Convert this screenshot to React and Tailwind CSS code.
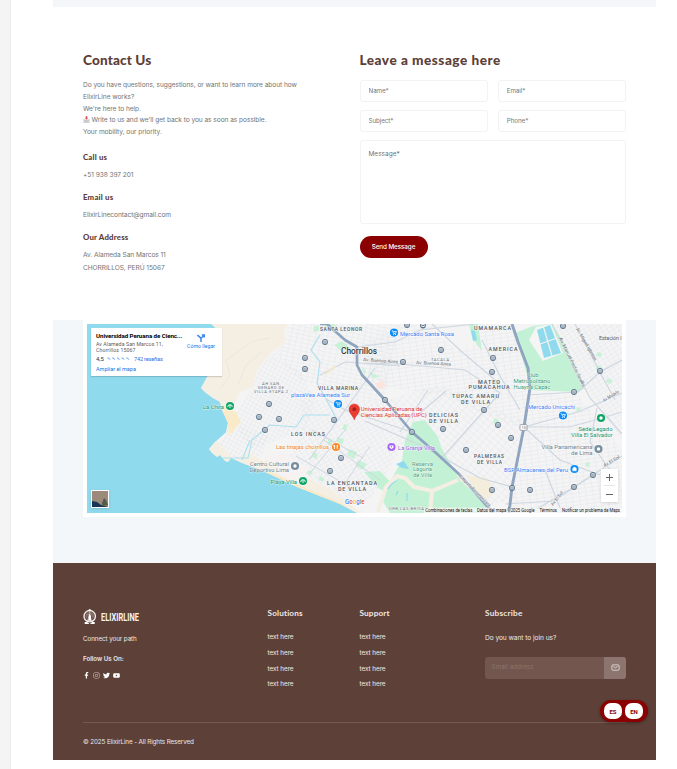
import React from "react";
import { FaFacebookF, FaInstagram, FaTwitter, FaYoutube } from "react-icons/fa";

const area = [
  ["SANTA LEONOR", 320, 331, 42, 4.9],
  ["VILLA MARINA", 318, 390, 40, 5],
  ["LOS INCAS", 291, 435.6, 34, 5.2],
  ["LA ENCANTADA", 327, 485, 50, 5.4],
  ["DE VILLA", 338, 491, 28, 5.4],
  ["DELICIAS", 429, 417.2, 29, 5.3],
  ["DE VILLA", 429, 423.4, 29, 5.3],
  ["PALMERAS", 474, 458.3, 30, 4.8],
  ["DE VILLA", 477, 463.5, 25, 4.8],
  ["UMAMARCA", 474, 329.6, 37, 5.3],
  ["AMERICA", 488.5, 351.2, 29, 5.3],
  ["MATEO", 478, 383.7, 22, 5.4],
  ["PUMACAHUA", 468.5, 389.4, 41, 5.4],
  ["TUPAC AMARU", 452, 398.3, 47, 5.4],
  ["DE VILLA", 461, 404.2, 29, 5.4],
];
const minor = [
  ["AH SAN", 262, 385.2, 17, 4],
  ["GENARO DE", 258, 389.4, 26, 4],
  ["VILLA ETAPA 2", 254, 393.4, 34, 4],
  ["TACALA", 431, 360.5, 18, 4],
  ["URB LAS BRISA", 389, 510, 35, 4.2],
];
const places = [
  ["Mercado Santa Rosa", 400, 335.6, 54, "#3b82f6"],
  ["plazaVea Alameda Sur", 291, 396.6, 59, "#3b82f6"],
  ["Mercado Unicachi", 528, 408.5, 47, "#3b82f6"],
  ["BSF Almacenes del Peru", 504, 472, 64, "#3b82f6"],
  ["La Chira", 203, 409, 21, "#12946a"],
  ["Playa Villa", 270.5, 484, 26.5, "#12946a"],
  ["Sede Legado", 578.5, 431, 34, "#12946a"],
  ["Villa El Salvador", 571, 437, 41.5, "#12946a"],
  ["Club", 527, 377.3, 11.5, "#3d9b78"],
  ["Metropolitano", 513.5, 383.4, 37, "#3d9b78"],
  ["Huayna Capac", 513.5, 389, 37, "#3d9b78"],
  ["Reserva", 412, 465.5, 21, "#4f9f83"],
  ["Laguna", 413, 471.3, 19, "#4f9f83"],
  ["de Villa", 413, 477, 19, "#4f9f83"],
  ["Centro Cultural", 250, 466, 39, "#6b8290"],
  ["Deportivo Lima", 249.5, 472.3, 39.5, "#6b8290"],
  ["Villa Panamericana", 541.5, 449, 51, "#6b8290"],
  ["de Lima", 571, 454.8, 21.5, "#6b8290"],
  ["Las tinajas chorrillos", 276, 449.3, 53, "#ef7f2c"],
  ["La Granja Villa", 398, 450, 37, "#a259e6"],
  ["Universidad Peruana de", 360.8, 410.9, 61.5, "#d92f2a"],
  ["Ciencias Aplicadas (UPC)", 360.8, 417.1, 66, "#d92f2a"],
];
const streets = [
  ["Av. Buenos Aires", 363, 361, 35, 4],
  ["Av. Buenos Aires", 416, 364, 35, 3],
  ["Av. Miguel Iglesias", 576, 329, 37, 60],
  ["Av. Manuel Pastor Sevilla", 559, 338.5, 54, 64],
  ["Av Modelo", 604, 402, 18, -31],
  ["Av El Sol", 604.5, 467, 18, -30],
  ["Av El Sol", 553, 506, 17, -52],
  ["Autopista Panamericana", 458, 476, 44, 45],
];
const stops = [
  [325, 342], [305, 358], [305, 369], [403, 362], [385, 400], [269, 404],
  [259, 417], [279, 419], [265, 430], [334, 420], [407, 325], [423, 325.5],
  [441, 350], [493, 358], [492, 372], [484, 410], [563, 326], [600, 371],
  [574, 392], [330, 471], [412, 432], [443, 429], [498, 425], [511, 438],
  [466, 450], [492, 490], [512, 488], [530, 490], [574, 487], [593, 475],
  [341, 458],
];
const coast =
  "M211 324 L218 330 L220 350 L217 366 L207 377 L201 388 L206 393 L213 398 L220 402 L222 410 L228 423 L226 432 L215 442 L209 449 L212 453 L217 457 L220 455 L225 461 L228 462 L231 458 L242 463 L263 471 L297 487 L340 504 L357 513 L622 513 L622 324 Z";

function Label({ item, fill, weight = 400, halo = "#f6f6f6", adjust = "spacingAndGlyphs" }) {
  const [text, x, y, width, size] = item;
  return (
    <text x={x} y={y} textLength={width} lengthAdjust={adjust} fontSize={size} fontWeight={weight} fill={fill} stroke={halo} strokeWidth="0.9" paintOrder="stroke" strokeLinejoin="round">
      {text}
    </text>
  );
}

function Cart({ x, y }) {
  return (
    <g transform={`translate(${x} ${y})`}>
      <circle r="4.6" fill="#fff" />
      <circle r="4.1" fill="#0b8df5" />
      <path d="M-2.3 -1.8h1l.9 2.6h2l.8-1.9h-2.9" fill="none" stroke="#fff" strokeWidth=".8" />
      <circle cx="-.3" cy="1.9" r=".5" fill="#fff" />
      <circle cx="1.5" cy="1.9" r=".5" fill="#fff" />
    </g>
  );
}

function Poi({ x, y, color, children }) {
  return (
    <g transform={`translate(${x} ${y})`}>
      <circle r="4.6" fill="#fff" />
      <circle r="4.1" fill={color} />
      {children || <circle r="1.7" fill="#fff" />}
    </g>
  );
}

function Grid({ id, angle, w = 5, h = 4 }) {
  return (
    <pattern id={id} width={w} height={h} patternUnits="userSpaceOnUse" patternTransform={`rotate(${angle})`}>
      <path d={`M0 0H${w}M0 0V${h}`} stroke="#dfe4ea" strokeWidth="0.8" />
    </pattern>
  );
}

function MapCanvas() {
  return (
    <svg viewBox="87 324 535 189" className="block h-[189px] w-[535px] font-[Roboto,sans-serif]">
      <defs>
        <clipPath id="land"><path d={coast} /></clipPath>
        <Grid id="g1" angle={-32} />
        <Grid id="g2" angle={12} w={6} />
        <Grid id="g3" angle={42} w={6} h={5} />
        <Grid id="g4" angle={-8} w={7} h={4} />
        <Grid id="g5" angle={28} w={4} h={4} />
      </defs>
      <rect x="87" y="324" width="535" height="189" fill="#90daee" />
      <g clipPath="url(#land)">
        <path d={coast} fill="#f5f4f5" />
        <path d="M288 324L400 324 385 400 345 400 300 380 275 353 285 342Z" fill="url(#g2)" />
        <path d="M253 387L257 370 272 353 300 372 316 400 305 430 250 450 232 420Z" fill="url(#g5)" />
        <path d="M218 446L232 425 270 435 262 455 240 462Z" fill="url(#g5)" />
        <path d="M400 324H513L528 385 524 430 440 395 372 385 362 345Z" fill="url(#g4)" />
        <path d="M300 400L380 400 412 432 370 500 340 504 280 475 305 425Z" fill="url(#g1)" />
        <path d="M385 400L440 385 524 420 514 500 490 505 430 440Z" fill="url(#g3)" />
        <path d="M527 395L578 395 622 450V513H510Z" fill="url(#g4)" />
        <path d="M545 324H622V440L585 388Z" fill="url(#g1)" />

        <path d="M195 324H288L284 330 286 342 270 353 257 370 253 387 240 392 227 420 236 430 228 436 215 400 195 395Z" fill="#f5efe3" />
        <path d="M222 405L236 412 241 422 230 434Z" fill="#f9ebc9" />
        <path d="M207 449L216 440 235 460 248 452 263 461 282 455 300 474 330 489 362 513H345L240 467 215 460Z" fill="#f5efe3" />
        <path d="M262 470L298 486 345 506" stroke="#f8e8c3" strokeWidth="2" fill="none" />
        <path d="M221 388L230 375 226 360 240 350 253 341 270 338M238 385L246 365 262 352" stroke="#dfe3d9" strokeWidth=".6" fill="none" />
        <path d="M465 475L488 478 494 492 487 500 474 489Z" fill="#f5eddc" />
        <path d="M263 455L282 452 312 470 305 486 280 475Z" fill="#f5f2f1" />
        <path d="M427 330L450 324 474 327 473 347 455 350 446 340Z" fill="#f5f4f5" />

        <path d="M515 333L533 326 552 324 567 347 585 388 578 392 528 390 527 375Z" fill="#c3f1d5" />
        <path d="M529 340L536 327 551 324 563 353 543 361Z" fill="#f5f5f3" />
        <path d="M537 330L550 325 561 353 544 358Z" fill="#90daee" />
        <path d="M543.5 327L552 356M540 344L557 338" stroke="#f2f4f3" strokeWidth="1.2" />
        <path d="M469 324H478L482 351 472 338Z" fill="#c3f1d5" />
        <path d="M471 330l4 1 2 9-4 1z" fill="#90daee" />
        <path d="M413 422L425 420 438 437 441 447 460 480 490 509 486 513H390L382 500 392 478 402 460 405 440Z" fill="#c3f1d5" />
        <path d="M396 464l8-3 5 8-7-1z" fill="#90daee" />
        <path d="M364 472L380 471 398 490 391 495 378 488Z" fill="#c3f1d5" />
        <path d="M378 512L386 487 397 476 405 478 414 487 432 491 458 480M432 491L430 513" stroke="#f5efe3" strokeWidth="4" fill="none" />
        <path d="M388 489q4-7 9-8M396 495l2-4M407 493v8" stroke="#90daee" strokeWidth="1.2" fill="none" />
        <path d="M334 345L342 341 353 350 340 350ZM322 324h12l4 3-6 4zM314 326l5 0v5l-6 1zM361 366l5 5-1 4zM368 371l12 6-7 1zM349 449l8 3-3 7-7-4zM358 460l9 4-4 6-8-4zM337 437l7 2-2 6-5-3zM344 424l4 1-2 6-4-2zM313 452l5 2-2 5-4-2zM329 438l4 2-2 6-4-2zM309 470l4 2-3 4-4-3zM320 476l5 3-3 3-4-3zM597 365l5 2-2 5-4-2zM597 352l5 1-1 4-5-1zM577 407l4 1-2 4-3-1zM607 378l6 2-3 4-4-2zM586 462l4 1-1 4-4-1zM494 418l5 2-2 5-4-2zM494 380l5 1-1 4-4-1z" fill="#c9f1d8" />
        <path d="M375 384l8-4 3 6-7 4z" fill="#fbe3de" />

        <path d="M320 335L311 350 320 362 317 383 326 399 337 420M222 458L248 458 252 440 270 425 296 427 304 415 330 415M242 460L250 440" stroke="#a9e0ee" strokeWidth="1.1" fill="none" />
        <g stroke="#ced7e0" fill="none" strokeWidth="1.2">
          <path d="M357 347L395 342 420 330 475 324M357 363L400 364 465 370 500 393M320 375L345 362 400 366M432 324L462 352 500 384M326 399L345 410 412 432M309 460L345 410 375 368M365 421L420 445 480 478 512 487M500 393L440 460M428 390L400 432M482 340L500 376 520 410M420 413L446 391" />
          <path d="M527 395L578 392 600 372 622 360M552 324L590 398 622 434M575 324L602 376 615 400M622 393L578 412 524 427M524 427L560 460 600 475M530 513L574 487 622 456M545 470L562 513M597 408L590 442 610 470" />
          <path d="M524 427H570L622 412M505 504L554 501 593 475M312 430L363 458M296 456L350 487M324 440L380 480M345 430L310 473M370 446L344 485" strokeWidth="1" />
        </g>
        <path d="M320 324H327L345 340 357 347 357 365 362 375 385 400 412 432 435 452 460 475 493 513" stroke="#8fa4bf" strokeWidth="2.7" strokeLinejoin="round" fill="none" />
        <path d="M512 324L518 342 528 368 530 388 524 427 512 487 509 513" stroke="#8fa4bf" strokeWidth="2.9" strokeLinejoin="round" fill="none" />
        <path d="M325 374l11-8" stroke="#f3e6c6" strokeWidth="1.6" />
      </g>

      {stops.map(([x, y], i) => (
        <g key={i} transform={`translate(${x} ${y})`}>
          <circle r="2.9" fill="#5c7288" />
          <rect x="-1.6" y="-1.8" width="3.2" height="3.2" rx=".5" fill="#e6ecf2" />
          <path d="M-1 0H1" stroke="#5c7288" strokeWidth=".9" />
        </g>
      ))}
      {streets.map(([t, x, y, w, a], i) => (
        <text key={i} transform={`translate(${x} ${y}) rotate(${a})`} textLength={w} lengthAdjust="spacingAndGlyphs" fontSize="4.6" fill="#5b6670" stroke="#f6f6f6" strokeWidth=".7" paintOrder="stroke">{t}</text>
      ))}
      {area.map((t, i) => <Label key={i} item={t} fill="#4d565f" weight={500} adjust="spacing" />)}
      {minor.map((t, i) => <Label key={i} item={t} fill="#68727b" adjust="spacing" />)}
      {places.map(([t, x, y, w, c], i) => <Label key={i} item={[t, x, y, w, 5.9]} fill={c} halo="#ffffffb0" />)}
      <Label item={["Chorrillos", 341, 354, 36, 8.4]} fill="#30373d" weight={500} />

      <Cart x={394} y={332.6} />
      <Cart x={338} y={404} />
      <Cart x={563} y={415.5} />
      <Poi x={574.5} y={469} color="#0b8df5"><path d="M-1.8-.7h3.6v2.5h-3.6zM-.9-.7v-1h1.8v1" fill="#fff" stroke="#fff" strokeWidth=".5" /></Poi>
      <Poi x={230} y={406} color="#10a568"><path d="M-2.3 1a2.3 2.3 0 0 1 4.6 0M0-1V2" fill="none" stroke="#fff" strokeWidth=".9" /></Poi>
      <Poi x={303} y={481} color="#10a568"><path d="M-2.3 1a2.3 2.3 0 0 1 4.6 0M0-1V2" fill="none" stroke="#fff" strokeWidth=".9" /></Poi>
      <Poi x={601} y={418} color="#10a568" />
      <Poi x={295} y={466} color="#788e9f" />
      <Poi x={598.5} y={449} color="#788e9f" />
      <Poi x={336} y={447} color="#f98b2b"><path d="M-1.5-2v4M-2.2-2v1.5h1.4M1.2-2v4M1.2-2q1.2 1 0 2.4" fill="none" stroke="#fff" strokeWidth=".8" /></Poi>
      <Poi x={391.5} y={447} color="#a566ee"><path d="M-2-1.6h4v2L0 2.2-2 .4z" fill="#fff" /><circle cy="-.2" r=".7" fill="#a566ee" /></Poi>
      <rect x="520" y="424.6" width="7" height="5.8" rx="1" fill="#fff" stroke="#7b8792" strokeWidth=".7" />
      <text x="521.5" y="429.2" fontSize="4" fill="#56616b">15</text>
      <path d="M354.3 420C353.4 415.8 349 413.6 349 409.2a5.3 5.3 0 0 1 10.6 0C359.6 413.6 355.2 415.8 354.3 420Z" fill="#ea3c33" stroke="#c5221f" strokeWidth=".4" />
      <circle cx="354.3" cy="409.2" r="1.9" fill="#a3201b" />
      <text x="345" y="503.6" fontSize="7.6" fontWeight="500" textLength="19.5" lengthAdjust="spacingAndGlyphs" stroke="#fff" strokeWidth=".8" paintOrder="stroke">
        <tspan fill="#4285f4">G</tspan><tspan fill="#ea4335">o</tspan><tspan fill="#fbbc05">o</tspan><tspan fill="#4285f4">g</tspan><tspan fill="#34a853">l</tspan><tspan fill="#ea4335">e</tspan>
      </text>
      <text x="599" y="339.6" fontSize="5.6" fill="#52606c" textLength="22.5" lengthAdjust="spacingAndGlyphs">Estación l</text>

      <rect x="424" y="507.5" width="198" height="5.5" fill="#f5f5f5" opacity=".75" />
      <g fontSize="4.7" fill="#111">
        <text x="425.3" y="511.8" textLength="47" lengthAdjust="spacingAndGlyphs">Combinaciones de teclas</text>
        <text x="477" y="511.8" textLength="57.5" lengthAdjust="spacingAndGlyphs">Datos del mapa ©2025 Google</text>
        <text x="539.5" y="511.8" textLength="17.5" lengthAdjust="spacingAndGlyphs">Términos</text>
        <text x="562" y="511.8" textLength="58" lengthAdjust="spacingAndGlyphs">Notificar un problema de Maps</text>
      </g>
    </svg>
  );
}

function PlaceCard() {
  return (
    <div className="absolute top-[4px] left-[4px] flex h-[48px] w-[131px] justify-between bg-white py-[4px] pr-[7px] pl-[5px] font-[Roboto,sans-serif] text-[5.2px] leading-[6px] whitespace-nowrap text-[#5b5b5b] shadow-[0_1px_1px_rgba(0,0,0,0.15)]">
      <div className="flex flex-col">
        <b className="w-[83px] text-[6.2px] leading-[8px] font-bold tracking-[-0.08px] text-black">Universidad Peruana de Cienc...</b>
        <span className="mt-[1px] tracking-[0.1px]">Av Alameda San Marcos 11,</span>
        <span className="tracking-[0.1px]">Chorrillos 15067</span>
        <div className="mt-[2.5px] flex items-center gap-[3px]">
          <span className="text-[6px] text-[#333]">4,5</span>
          <svg viewBox="0 0 23 4" className="h-[4px] w-[23px]" fill="none" stroke="#4f95ee" strokeWidth="0.9">
            <path d="M.5 1l1.5.2 1 1.5M5.2 1l1.5.2 1 1.5M9.9 1l1.5.2 1 1.5M14.6 1l1.5.2 1 1.5M19.3 1l1.5.2 1 1.5" />
          </svg>
          <span className="ml-[1px] text-[5.5px] tracking-[-0.12px] text-[#1a73e8]">742 reseñas</span>
        </div>
        <span className="mt-[4px] text-[5.5px] text-[#1a73e8]">Ampliar el mapa</span>
      </div>
      <div className="flex flex-col items-center pt-[1.5px] text-[#1a73e8]">
        <svg viewBox="0 0 8 8" className="h-[8px] w-[8px]" fill="none" stroke="#3d87ee" strokeWidth="1.5">
          <path d="M.4 1L4 4.2V8M4 4.2L6.5 2M4.7 1H7.3V3.6" />
        </svg>
        <span className="mt-[1.5px] text-[5.2px]">Cómo llegar</span>
      </div>
    </div>
  );
}

function Field({ label }) {
  return (
    <input
      placeholder={label}
      className="h-[22px] w-full rounded-[3px] border border-[#f3f3f3] bg-white px-[8px] text-[6.3px] tracking-[-0.1px] outline-none placeholder:text-[#777]"
    />
  );
}

function Detail({ title, children }) {
  return (
    <div className="mt-[10.5px]">
      <h3 className="font-[Lato,sans-serif] text-[7.8px] leading-[10px] font-black tracking-[0.2px] text-[#5d4037]">{title}</h3>
      <p className="mt-[6.5px] text-[6.6px] leading-[13px] tracking-[-0.07px] text-[#747474]">{children}</p>
    </div>
  );
}

function LinkColumn({ title }) {
  return (
    <div className="w-[92px]">
      <h4 className="font-[Lato,sans-serif] text-[8.2px] leading-[10px] font-bold tracking-[0.15px]">{title}</h4>
      <ul className="mt-[12.3px] text-[6.4px] leading-[15.7px] tracking-[-0.07px]">
        <li>text here</li>
        <li>text here</li>
        <li>text here</li>
        <li>text here</li>
      </ul>
    </div>
  );
}

function Logo() {
  return (
    <svg viewBox="0 0 62 16" className="block h-[16px] w-[62px]" fill="none">
      <circle cx="6.7" cy="7.2" r="5.7" stroke="#eee8e6" strokeWidth="1.4" />
      <circle cx="6.7" cy="7.2" r="4.4" fill="#a08d86" opacity=".6" />
      <path d="M5.7.3h2v2h-2z" fill="#fff" />
      <path d="M1.7 15V13h3v1h1.2v1zM11.7 15V13h-3v1H7.5v1z" fill="#fff" />
      <path d="M6.7 2.2L8 6v5.2H5.4V6z" fill="#fff" />
      <path d="M6.7 3.5L3.6 10.3M6.7 3.5L9.8 10.3" stroke="#5d4037" strokeWidth=".6" />
      <path d="M4 11.4h5.4" stroke="#fff" strokeWidth=".8" />
      <text x="18" y="11.6" fontFamily="Roboto, sans-serif" fontWeight="700" fontSize="10.6" fill="#f7f3f1" textLength="38" lengthAdjust="spacingAndGlyphs">ELIXIRLINE</text>
    </svg>
  );
}

export default function App() {
  return (
    <div className="flex h-[769px] w-[677px] overflow-hidden bg-white font-[Inter,sans-serif]">
      <div className="w-[11px] shrink-0 border-r border-[#ececec] bg-[#f4f4f4]" />
      <main className="relative ml-[42px] w-[603px] shrink-0">
        <div className="h-[7px] bg-[#f3f7fa]" />

        <section className="flex h-[313px] justify-between px-[30px] pt-[43px]">
          <div className="w-[225px] whitespace-nowrap">
            <h2 className="font-[Lato,sans-serif] text-[13.6px] leading-[20px] font-black tracking-[0.12px] text-[#5d4037]">Contact Us</h2>
            <p className="mt-[10px] text-[6.6px] leading-[11.75px] tracking-[-0.055px] text-[#747474]">
              Do you have questions, suggestions, or want to learn more about how
              <br />
              ElixirLine works?
              <br />
              We're here to help.
              <br />
              <svg viewBox="0 0 8 8" className="mr-[1.5px] inline-block h-[7px] w-[7px] align-[-0.5px]">
                <path d="M.5 4h7v3.5h-7z" fill="#d6d8da" />
                <path d="M.5 4l3.5 2 3.5-2M.5 7.2h7" stroke="#a9abad" strokeWidth=".6" fill="none" />
                <path d="M3.2 0h1.6v2H6L4 4.2 2 2h1.2z" fill="#e2555a" />
              </svg>
              Write to us and we'll get back to you as soon as possible.
              <br />
              Your mobility, our priority.
            </p>
            <div className="pt-[2.75px]">
              <Detail title="Call us">+51 938 397 201</Detail>
              <Detail title="Email us">ElixirLinecontact@gmail.com</Detail>
              <Detail title="Our Address">
                Av. Alameda San Marcos 11
                <br />
                CHORRILLOS, PERÚ 15067
              </Detail>
            </div>
          </div>

          <form className="w-[266.5px]">
            <h2 className="font-[Lato,sans-serif] text-[13.6px] leading-[20px] font-black tracking-[0.5px] text-[#5d4037]">Leave a message here</h2>
            <div className="mt-[9.5px] grid grid-cols-2 gap-x-[10px] gap-y-[8px]">
              <Field label="Name*" />
              <Field label="Email*" />
              <Field label="Subject*" />
              <Field label="Phone*" />
            </div>
            <textarea
              placeholder="Message*"
              className="mt-[8.5px] block h-[84px] w-full resize-none rounded-[3px] border border-[#f3f3f3] bg-white px-[8px] py-[9px] text-[6.5px] leading-[8px] outline-none placeholder:text-[#6c757d]"
            />
            <button type="button" className="mt-[12px] block h-[22px] w-[68px] rounded-full bg-[#8b0000] pt-[0.5px] text-[6.3px] font-medium tracking-[-0.08px] text-white">
              Send Message
            </button>
          </form>
        </section>

        <section className="h-[243px] bg-[#f3f7fa] px-[30px]">
          <div className="h-[197px] bg-white p-[4px]">
            <div className="relative h-[189px] w-[535px] overflow-hidden">
              <MapCanvas />
              <PlaceCard />
              <div className="absolute bottom-[5px] left-[4px] h-[18px] w-[18px] border border-white shadow-sm">
                <svg viewBox="0 0 16 16" className="block h-full w-full">
                  <rect width="16" height="16" fill="#9c8a7c" />
                  <path d="M0 10l5 1 4 3 7 2H0z" fill="#173657" />
                  <path d="M10 12l2-5 2 2 2 5-6 1z" fill="#555b4b" />
                </svg>
              </div>
              <div className="absolute right-[4px] bottom-[11px] flex h-[33px] w-[17px] flex-col items-center bg-white shadow-sm">
                <svg viewBox="0 0 17 33" className="h-[33px] w-[17px]" stroke="#666" strokeWidth="1">
                  <path d="M5 8.5h7M8.5 5v7M5 25.5h7" />
                  <path d="M3 16.5h11" stroke="#e6e6e6" />
                </svg>
              </div>
            </div>
          </div>
        </section>

        <footer className="h-[196.5px] bg-[#5d4037] px-[30px] pt-[45px] text-[#eee8e6]">
          <div className="flex h-[114px] whitespace-nowrap">
            <div className="w-[184.5px] pt-[1px]">
              <Logo />
              <p className="mt-[9px] text-[6.3px] leading-[10px] tracking-[-0.09px]">Connect your path</p>
              <p className="mt-[9.5px] text-[6.2px] leading-[10px] font-semibold tracking-[-0.02px]">Follow Us On:</p>
              <div className="mt-[8.5px] flex items-center gap-[3px] text-[7px] text-white">
                <FaFacebookF className="w-[7px] text-[6.5px]" />
                <FaInstagram className="text-[7px] text-[#cfc4c0]" />
                <FaTwitter className="text-[7px]" />
                <FaYoutube className="text-[7px]" />
              </div>
            </div>
            <LinkColumn title="Solutions" />
            <LinkColumn title="Support" />
            <div className="ml-[33.5px] w-[141px]">
              <h4 className="font-[Lato,sans-serif] text-[8.2px] leading-[10px] font-bold tracking-[0.25px]">Subscribe</h4>
              <p className="mt-[15px] text-[6.6px] leading-[10px] tracking-[-0.05px]">Do you want to join us?</p>
              <div className="mt-[13.5px] flex h-[22px] overflow-hidden rounded-[3px] bg-[#73574f]">
                <input placeholder="Email address" className="w-[119px] bg-transparent px-[7px] text-[6.3px] outline-none placeholder:text-[#8a726b]" />
                <button type="button" className="flex w-[22px] items-center justify-center bg-[#8c756e]">
                  <svg viewBox="0 0 9 7" className="h-[7px] w-[9px]" fill="none" stroke="#eee8e6" strokeWidth=".8">
                    <rect x=".9" y=".9" width="7.2" height="5.3" rx="1" />
                    <path d="M2.4 2.5l2.1 1.3 2.1-1.3" />
                  </svg>
                </button>
              </div>
            </div>
          </div>
          <div className="border-t border-[#75594f] pt-[13.5px]">
            <p className="text-[6.3px] leading-[10px] tracking-[-0.12px]">© 2025 ElixirLine - All Rights Reserved</p>
          </div>
        </footer>

        <div className="absolute top-[700px] right-[8.5px] flex h-[22px] w-[48px] items-center justify-center gap-[3px] rounded-full bg-[#8b0000] font-[Roboto,sans-serif] text-[6px] font-bold text-[#8b0000] shadow-[0_1px_3px_rgba(0,0,0,0.35)]">
          <span className="flex h-[16px] w-[18px] items-center justify-center rounded-[7px] bg-white">ES</span>
          <span className="flex h-[16px] w-[18px] items-center justify-center rounded-[7px] bg-white">EN</span>
        </div>
      </main>
    </div>
  );
}
